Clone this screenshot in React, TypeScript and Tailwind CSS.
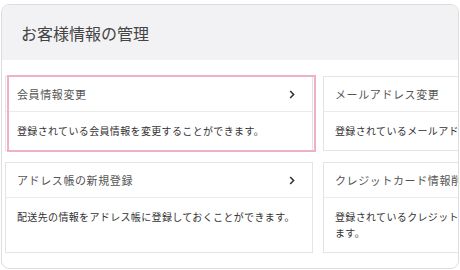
import React from "react"

type Item = {
    title: string
    body: string
    active?: boolean
}

const items: Item[] = [
    { title: "会員情報変更", body: "登録されている会員情報を変更することができます。", active: true },
    { title: "メールアドレス変更", body: "登録されているメールアドレスを変更することができます。" },
    { title: "アドレス帳の新規登録", body: "配送先の情報をアドレス帳に登録しておくことができます。" },
    { title: "クレジットカード情報削除", body: "登録されているクレジットカード情報を削除することができます。" },
]

const Chevron = () => (
    <svg width="6" height="9" viewBox="0 0 6 9" fill="none">
        <path d="M1.2 1 L4.6 4.5 L1.2 8" stroke="#333" strokeWidth="1.6" />
    </svg>
)

const Card = ({ title, body, active }: Item) => {
    return (
        <div className="relative flex flex-col border border-[#e4e4e4] bg-white">
            <div className="flex h-[35px] items-center justify-between border-b border-[#ebebeb] pl-[11px] pr-[17px]">
                <span className="whitespace-nowrap text-[11px] tracking-[0.6px] text-[#555]">{title}</span>
                <Chevron />
            </div>
            <p className="flex-1 px-[11px] py-[11px] text-[10px] leading-[16px] tracking-[0.35px] text-[#333]">{body}</p>
            {active && (
                <div className="pointer-events-none absolute -top-[2px] -bottom-[2px] left-[1px] -right-[4px] border-2 border-[#eeb0cb]" />
            )}
        </div>
    )
}

export default function App() {
    return (
        <div
            className="h-[270px] w-[460px] bg-white pt-[4px] pl-[1px]"
            style={{ fontFamily: '"Noto Sans CJK JP", "Noto Sans", sans-serif' }}
        >
            <div className="h-[265px] w-[458px] overflow-hidden rounded-[8px] border border-[#dddddd] bg-white">
                <div className="flex h-[55px] items-center bg-[#f2f2f4] px-[19px] text-[16px] text-[#444]">
                    お客様情報の管理
                </div>
                <div className="grid grid-cols-[308px_308px] gap-x-[10px] gap-y-[11px] pl-[3px] pt-[16px]">
                    {items.map((it) => (
                        <Card key={it.title} {...it} />
                    ))}
                </div>
            </div>
        </div>
    )
}
